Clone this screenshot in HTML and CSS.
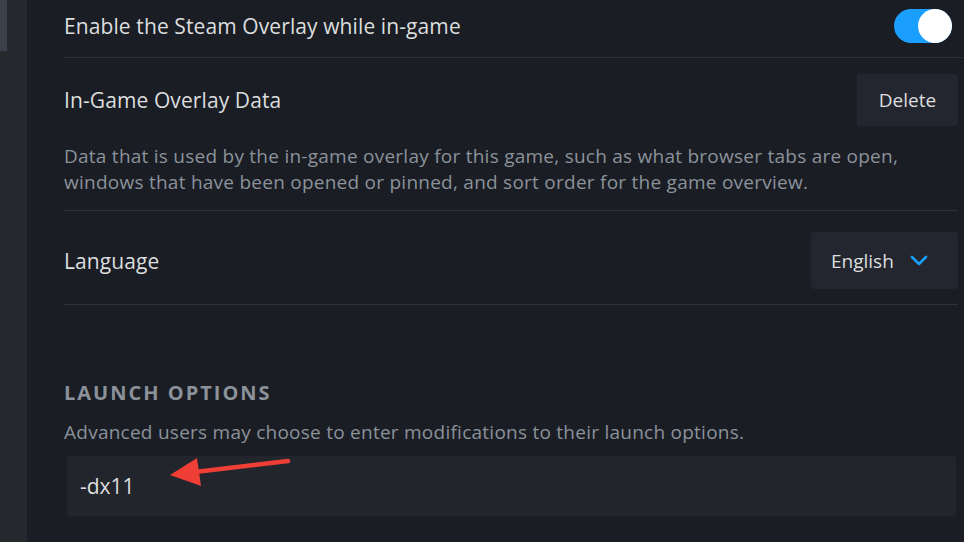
FILE: index.html
```html
<!DOCTYPE html>
<html lang="en">
<head>
<meta charset="utf-8">
<title>Game Properties</title>
<link rel="stylesheet" href="styles.css">
</head>
<body>
<div class="sidebar"><div class="thumb"></div></div>
<main class="main">
  <div class="row row-overlay">
    <span class="label">Enable the Steam Overlay while in-game</span>
    <span class="toggle"><span class="knob"></span></span>
  </div>
  <div class="row-block row-data">
    <div class="row-head">
      <span class="label">In-Game Overlay Data</span>
      <button class="btn btn-delete">Delete</button>
    </div>
    <p class="desc">Data that is used by the in-game overlay for this game, such as what browser tabs are open, windows that have been opened or pinned, and sort order for the game overview.</p>
  </div>
  <div class="row-block row-lang">
    <div class="row-head">
      <span class="label">Language</span>
      <button class="btn btn-drop">English
        <svg class="chev" width="18" height="12" viewBox="0 0 18 12"><path d="M2 2 L9 9 L16 2" fill="none" stroke="#1a9fff" stroke-width="2.6" stroke-linecap="round" stroke-linejoin="round"/></svg>
      </button>
    </div>
  </div>
  <section class="launch">
    <h2 class="section-title">LAUNCH OPTIONS</h2>
    <p class="desc launch-desc">Advanced users may choose to enter modifications to their launch options.</p>
    <div class="input">-dx11</div>
  </section>
</main>
<svg class="arrow" width="140" height="40" viewBox="0 0 140 40"><line x1="128" y1="5" x2="35" y2="16" stroke="#ef3e36" stroke-width="4.5" stroke-linecap="round"/><polygon points="10,19 37,2 41,30" fill="#ef3e36"/></svg>
</body>
</html>
```
FILE: styles.css
```css
* { box-sizing: border-box; }
html, body { margin: 0; height: 100%; }
body {
  display: flex;
  background: #1a1d24;
  font-family: "Open Sans", "Liberation Sans", sans-serif;
  color: #dcdedf;
  overflow: hidden;
  position: relative;
}
.sidebar {
  width: 27px;
  flex: none;
  background: #25282d;
}
.thumb {
  width: 7px;
  height: 51px;
  background: #3b404a;
}
.main {
  flex: 1;
  padding: 0 6px 0 37px;
}
.label {
  font-size: 21px;
  letter-spacing: 0.1px;
  color: #dcdedf;
}
.row {
  display: flex;
  align-items: center;
  justify-content: space-between;
}
.row-overlay {
  height: 58px;
  padding-bottom: 6px;
  margin-right: -6px;
  padding-right: 12px;
  border-bottom: 1px solid #2d3139;
}
.toggle {
  width: 58px;
  height: 34px;
  border-radius: 17px;
  background: #1a9fff;
  display: flex;
  justify-content: flex-end;
}
.knob {
  width: 34px;
  height: 34px;
  border-radius: 50%;
  background: #ffffff;
}
.row-block {
  border-bottom: 1px solid #2d3139;
}
.row-head {
  display: flex;
  align-items: center;
  justify-content: space-between;
}
.row-data { padding: 16px 0 15px; }
.row-data .row-head { height: 52px; }
.row-lang { padding: 21px 0 15px; }
.row-lang .row-head { height: 57px; }
.btn {
  border: none;
  border-radius: 3px;
  background: #23262e;
  color: #dcdedf;
  font-family: inherit;
  font-size: 19px;
  height: 100%;
  display: flex;
  align-items: center;
  gap: 16px;
}
.btn-delete { width: 101px; justify-content: center; }
.btn-drop { width: 147px; padding: 0 0 0 20px; }
.desc {
  margin: 0;
  font-size: 19px;
  letter-spacing: 0.25px;
  line-height: 26px;
  color: #8b929a;
}
.row-data .desc { margin-top: 17px; }
.launch { padding-top: 76px; }
.section-title {
  margin: 0;
  font-size: 20px;
  font-weight: 700;
  letter-spacing: 2px;
  line-height: 24px;
  color: #8b929a;
}
.launch-desc {
  margin-top: 15px;
  line-height: 24px;
}
.input {
  margin: 12px 2px 0 3px;
  height: 60px;
  background: #22252c;
  border-radius: 2px;
  padding-left: 13px;
  display: flex;
  align-items: center;
  font-size: 21px;
  color: #dcdedf;
}
.arrow {
  position: absolute;
  left: 160px;
  top: 456px;
}
```
